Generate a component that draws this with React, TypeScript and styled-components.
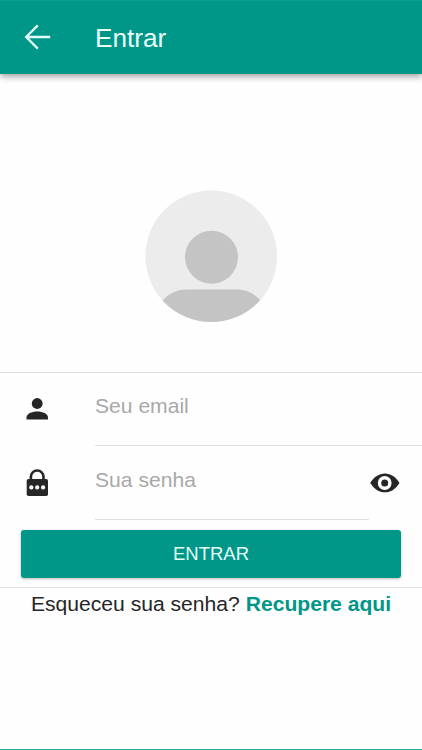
import React from "react";
import styled, { createGlobalStyle } from "styled-components";

const TEAL = "#009688";

const GlobalStyle = createGlobalStyle`
  *, *::before, *::after { box-sizing: border-box; }
  body {
    margin: 0;
    background: #fff;
    font-family: "Liberation Sans", Arial, sans-serif;
    overflow: hidden;
  }
`;

const Screen = styled.div`
  display: flex;
  flex-direction: column;
  height: 750px;
  background: #fefefe;
  border-bottom: 1px solid #2aa69b;
`;

const Toolbar = styled.header`
  display: flex;
  align-items: center;
  flex: none;
  height: 74px;
  padding-left: 24px;
  background: ${TEAL};
  border-top: 1px solid #08a092;
  box-shadow: 0 2px 7px rgba(0, 0, 0, 0.42);
`;

const BackButton = styled.button`
  display: flex;
  width: 71px;
  padding: 0 0 2px;
  border: 0;
  background: none;
`;

const Title = styled.h1`
  margin: 0;
  color: #e9fffb;
  font-size: 26.2px;
  font-weight: 400;
  line-height: 30px;
`;

const AvatarArea = styled.div`
  display: flex;
  justify-content: center;
  flex: none;
  height: 298px;
  padding-top: 116px;
`;

const Form = styled.form`
  display: flex;
  flex-direction: column;
  flex: none;
  height: 216px;
  border-top: 1px solid #dedede;
  border-bottom: 1px solid #e0e0e0;
`;

const Field = styled.label<{ $height: number }>`
  display: flex;
  flex: none;
  height: ${(p) => p.$height}px;
  padding-left: 24px;
`;

const FieldIcon = styled.span<{ $top: number }>`
  flex: none;
  width: 71px;
  padding-top: ${(p) => p.$top}px;
  svg { display: block; }
`;

const TextInput = styled.input<{ $bottom: number }>`
  flex: 1;
  min-width: 0;
  padding: 0 0 ${(p) => p.$bottom}px;
  border: 0;
  border-bottom: 1px solid #e0e0e0;
  border-radius: 0;
  outline: 0;
  background: transparent;
  color: #262626;
  font: 21.1px "Liberation Sans", Arial, sans-serif;
  &::placeholder { color: #a8a8a8; opacity: 1; }
`;

const RevealButton = styled.button`
  flex: none;
  width: 53px;
  padding: 27px 0 0 1px;
  border: 0;
  background: none;
  display: flex;
  align-items: flex-start;
`;

const SubmitButton = styled.button`
  flex: none;
  height: 48px;
  margin: 10px 21px 0;
  padding: 0;
  border: 0;
  border-radius: 3px;
  background: ${TEAL};
  color: #e4fffa;
  font: 18.5px "Liberation Sans", Arial, sans-serif;
  box-shadow: 0 1px 3px rgba(0, 0, 0, 0.28);
`;

const Recovery = styled.p`
  margin: 4px 0 0;
  color: #262626;
  font-size: 21.12px;
  line-height: 24px;
  text-align: center;
  white-space: nowrap;
`;

const RecoveryLink = styled.a`
  color: ${TEAL};
  font-weight: 700;
`;

const BackIcon = () => (
  <svg width="27" height="28" viewBox="0 0 27 28" fill="none" stroke="#e4fffa" strokeWidth="2.3">
    <path d="M26.2 14H2.400M13.800 2.400L2.200 14l11.600 11.600" />
  </svg>
);

const Avatar = () => (
  <svg width="132" height="132" viewBox="0 0 132 132">
    <defs>
      <clipPath id="avatar-circle">
        <circle cx="66.2" cy="66.2" r="65.8" />
      </clipPath>
    </defs>
    <g clipPath="url(#avatar-circle)">
      <rect width="132" height="132" fill="#ececec" />
      <circle cx="66.500" cy="67.200" r="26.500" fill="#c4c4c4" />
      <path d="M12 117C20 106 29 99.500 41 99.500H92C104 99.500 113 106 121 117V132H12Z" fill="#c4c4c4" />
    </g>
  </svg>
);

const PersonIcon = () => (
  <svg width="26" height="22" viewBox="0 0 26 22" fill="#262626">
    <circle cx="13.2" cy="5.5" r="5.4" />
    <path d="M2.5 21.4V19.4C2.5 15.7 7.600 13.400 13.200 13.400S24 15.700 24 19.400V21.400Z" />
  </svg>
);

const LockIcon = () => (
  <svg width="26" height="28" viewBox="0 0 26 28">
    <path d="M6.900 11V7.800a6.300 6.300 0 0 1 12.600 0V11" fill="none" stroke="#262626" strokeWidth="2.6" />
    <rect x="2.700" y="10" width="21.300" height="17" rx="1.800" fill="#262626" />
    <circle cx="7.300" cy="18.400" r="2.100" fill="#fff" />
    <circle cx="13.200" cy="18.400" r="2.100" fill="#fff" />
    <circle cx="19.100" cy="18.400" r="2.100" fill="#fff" />
  </svg>
);

const EyeIcon = () => (
  <svg width="30" height="20" viewBox="0 0 30 20">
    <path d="M.2 10C4 4 9 .6 14.900.6S25.700 4 29.500 10C25.700 16 20.800 19.300 14.900 19.300S4 16 .2 10Z" fill="#262626" />
    <circle cx="14.700" cy="10" r="6.900" fill="#fff" />
    <circle cx="14.700" cy="10" r="3.500" fill="#262626" />
  </svg>
);

export default function App() {
  return (
    <>
      <GlobalStyle />
      <Screen>
        <Toolbar>
          <BackButton type="button" aria-label="Voltar">
            <BackIcon />
          </BackButton>
          <Title>Entrar</Title>
        </Toolbar>
        <AvatarArea>
          <Avatar />
        </AvatarArea>
        <Form onSubmit={(e) => e.preventDefault()}>
          <Field $height={73}>
            <FieldIcon $top={25}>
              <PersonIcon />
            </FieldIcon>
            <TextInput type="email" placeholder="Seu email" $bottom={6} />
          </Field>
          <Field $height={74}>
            <FieldIcon $top={23}>
              <LockIcon />
            </FieldIcon>
            <TextInput type="password" placeholder="Sua senha" $bottom={6} />
            <RevealButton type="button" aria-label="Mostrar senha">
              <EyeIcon />
            </RevealButton>
          </Field>
          <SubmitButton type="submit">ENTRAR</SubmitButton>
        </Form>
        <Recovery>
          Esqueceu sua senha? <RecoveryLink>Recupere aqui</RecoveryLink>
        </Recovery>
      </Screen>
    </>
  );
}
